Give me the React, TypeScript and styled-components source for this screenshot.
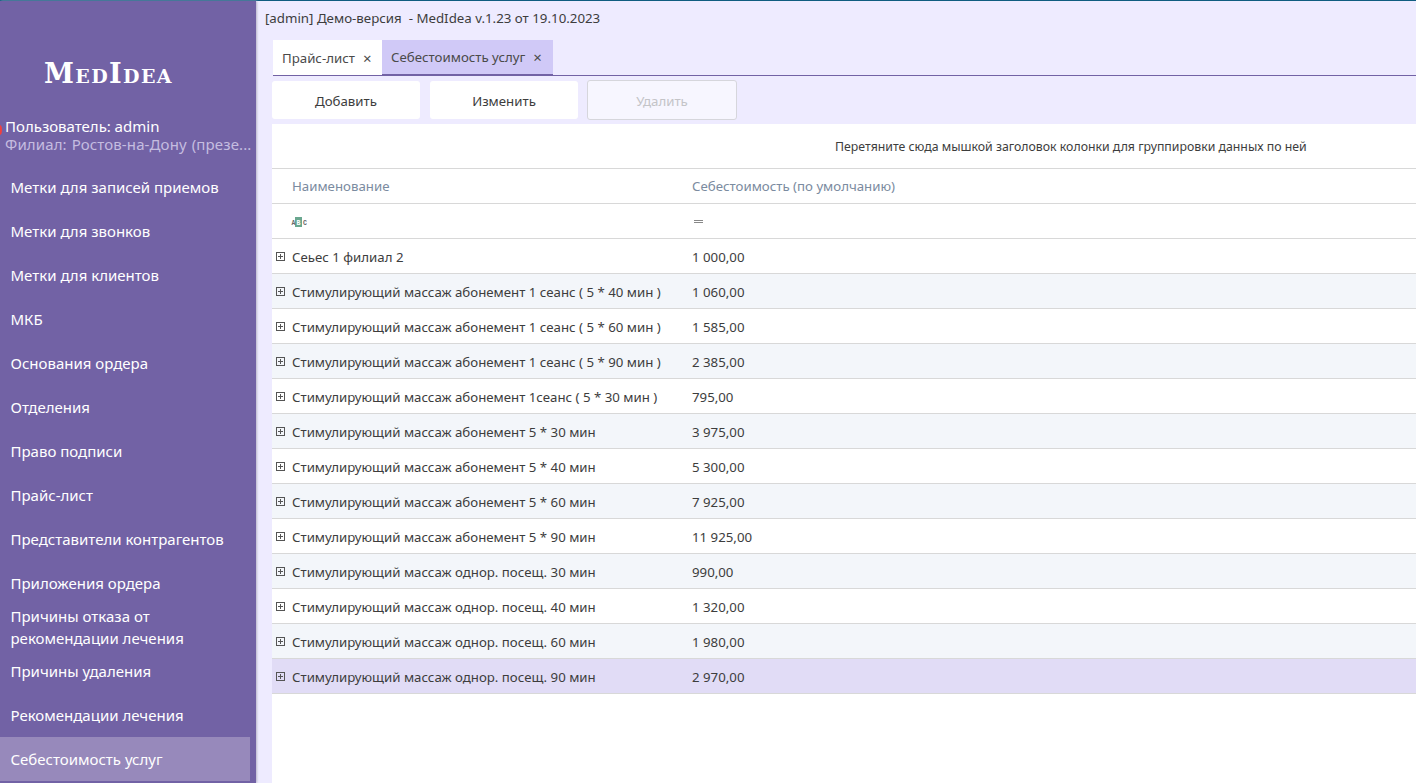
import React from "react";
import styled, { createGlobalStyle } from "styled-components";

const Global = createGlobalStyle`
  html, body { margin: 0; padding: 0; height: 100%; overflow: hidden; }
  body { font-family: "Noto Sans", "Open Sans", sans-serif; background: #eeebff; }
  #root { height: 100%; }
`;

const Page = styled.div`
  width: 1416px;
  height: 783px;
  display: flex;
  flex-direction: column;
  overflow: hidden;
  background: #eeebff;
`;
const TopLine = styled.div`
  height: 1px;
  flex: none;
  background: #0f5c80;
`;
const Body = styled.div`
  flex: 1;
  min-height: 0;
  display: flex;
`;
const Sidebar = styled.aside`
  width: 256px;
  flex: none;
  background: #7262a5;
  box-shadow: 1px 0 2px #b9b4c9;
  display: flex;
  flex-direction: column;
  overflow: hidden;
  color: #fff;
`;
const Logo = styled.div`
  height: 115px;
  flex: none;
  box-sizing: border-box;
  padding: 54px 0 0 44px;
  font-family: "DejaVu Serif", serif;
  font-weight: 700;
  font-size: 27px;
  line-height: 38px;
  letter-spacing: 1.4px;
  font-variant: small-caps;
  white-space: nowrap;
`;
const UserBlock = styled.div`
  position: relative;
  height: 49px;
  flex: none;
  box-sizing: border-box;
  padding: 1px 0 0 5px;
  font-size: 15px;
  line-height: 18px;
  white-space: pre;
`;
const Dot = styled.span`
  position: absolute;
  left: -3px;
  top: 9px;
  width: 5px;
  height: 10px;
  border-radius: 50%;
  background: #ef4040;
`;
const Branch = styled.div`
  color: #c5bde0;
  word-spacing: 1px;
  letter-spacing: 0.12px;
`;
const MenuItem = styled.div<{ $active?: boolean }>`
  height: 44px;
  width: 250px;
  flex: none;
  box-sizing: border-box;
  padding: 0 10px 0 10.5px;
  display: flex;
  align-items: center;
  font-size: 15px;
  line-height: 22px;
  background: ${(p) => (p.$active ? "#9789bb" : "transparent")};
`;
const Main = styled.main`
  flex: 1;
  min-width: 0;
  display: flex;
  flex-direction: column;
`;
const Title = styled.div`
  height: 39px;
  flex: none;
  box-sizing: border-box;
  padding: 8px 0 0 9px;
  font-size: 13.3px;
  line-height: 18px;
  color: #3d3d3d;
  white-space: pre;
`;
const TabBar = styled.div`
  height: 36px;
  flex: none;
  margin-left: 17px;
  display: flex;
  border-bottom: 1px solid #7262a5;
  box-sizing: border-box;
`;
const Tab = styled.div<{ $active?: boolean }>`
  height: ${(p) => (p.$active ? "36px" : "35px")};
  box-sizing: border-box;
  padding: 0 10.6px 0 9px;
  display: flex;
  align-items: center;
  gap: 8px;
  font-size: 13.25px;
  color: #4a4a4a;
  background: ${(p) => (p.$active ? "#d0c9f7" : "#fff")};
  border-bottom: ${(p) => (p.$active ? "2px solid #7262a5" : "none")};
  white-space: nowrap;
`;
const Close = styled.span`
  font-size: 15px;
`;
const Toolbar = styled.div`
  height: 38px;
  flex: none;
  margin: 5px 0 0 16px;
  display: flex;
  gap: 10px;
`;
const Btn = styled.button<{ $disabled?: boolean }>`
  height: ${(p) => (p.$disabled ? "40px" : "38px")};
  margin-top: ${(p) => (p.$disabled ? "-1px" : "0")};
  margin-left: ${(p) => (p.$disabled ? "-1px" : "0")};
  width: ${(p) => (p.$disabled ? "150px" : "148px")};
  box-sizing: border-box;
  border: ${(p) => (p.$disabled ? "1px solid #d6d6dc" : "none")};
  border-radius: 3px;
  background: ${(p) => (p.$disabled ? "#f7f6ff" : "#fff")};
  color: ${(p) => (p.$disabled ? "#c4c4c8" : "#3d3d3d")};
  font-family: inherit;
  font-size: 13.25px;
  padding: 1px 0 0;
`;
const Grid = styled.section`
  flex: 1;
  min-height: 0;
  margin: 5px 0 0 16px;
  background: #fff;
  display: flex;
  flex-direction: column;
`;
const GroupPanel = styled.div`
  height: 45px;
  flex: none;
  box-sizing: border-box;
  border-bottom: 1px solid #d8d8d8;
  padding-left: 563px;
  display: flex;
  align-items: center;
  font-size: 12.3px;
  color: #3d3d3d;
`;
const Row = styled.div<{ $bg?: string; $muted?: boolean }>`
  height: 35px;
  flex: none;
  box-sizing: border-box;
  display: grid;
  grid-template-columns: 20px 400px 1fr;
  align-items: center;
  border-bottom: 1px solid #d8d8d8;
  background: ${(p) => p.$bg ?? "#fff"};
  color: ${(p) => (p.$muted ? "#7b8ba0" : "#3d3d3d")};
  font-size: 13.25px;
  white-space: nowrap;
`;
const Expand = styled.svg`
  display: block;
  margin-left: 4px;
`;
const Cell = styled.div`
  padding-top: 1px;
`;
const HeadCell = styled.div`
  padding-bottom: 1px;
`;
const FilterGlyph = styled.svg`
  display: block;
  margin-left: -1px;
`;
const EqualsGlyph = styled.svg`
  display: block;
`;

const PlusBox = () => (
  <Expand width="9" height="9" viewBox="0 0 9 9" fill="none" stroke="#555" strokeWidth="1" shapeRendering="crispEdges">
    <rect x="0.5" y="0.5" width="8" height="8" />
    <path d="M2 4.5H7M4.5 2V7" />
  </Expand>
);
const AbcIcon = () => (
  <FilterGlyph width="16" height="10" viewBox="0 0 16 10">
    <rect x="4" y="0" width="7" height="10" fill="#6aa78f" />
    <text x="0.5" y="7.5" fontSize="6.5" fontWeight="700" fill="#666" fontFamily="Liberation Mono, monospace">A</text>
    <text x="5.5" y="7.5" fontSize="6.5" fontWeight="700" fill="#fff" fontFamily="Liberation Mono, monospace">B</text>
    <text x="12" y="7.5" fontSize="6.5" fontWeight="700" fill="#666" fontFamily="Liberation Mono, monospace">C</text>
  </FilterGlyph>
);
const EqualsIcon = () => (
  <EqualsGlyph width="11" height="3" viewBox="0 0 11 3" shapeRendering="crispEdges">
    <path d="M2 .5H11M2 2.5H11" stroke="#888" strokeWidth="1" />
  </EqualsGlyph>
);

const menu = [
  "Метки для записей приемов",
  "Метки для звонков",
  "Метки для клиентов",
  "МКБ",
  "Основания ордера",
  "Отделения",
  "Право подписи",
  "Прайс-лист",
  "Представители контрагентов",
  "Приложения ордера",
  "Причины отказа от рекомендации лечения",
  "Причины удаления",
  "Рекомендации лечения",
];
const rows: [string, string][] = [
  ["Сеьес 1 филиал 2", "1 000,00"],
  ["Стимулирующий массаж абонемент 1 сеанс ( 5 * 40 мин )", "1 060,00"],
  ["Стимулирующий массаж абонемент 1 сеанс ( 5 * 60 мин )", "1 585,00"],
  ["Стимулирующий массаж абонемент 1 сеанс ( 5 * 90 мин )", "2 385,00"],
  ["Стимулирующий массаж абонемент 1сеанс ( 5 * 30 мин )", "795,00"],
  ["Стимулирующий массаж абонемент 5 * 30 мин", "3 975,00"],
  ["Стимулирующий массаж абонемент 5 * 40 мин", "5 300,00"],
  ["Стимулирующий массаж абонемент 5 * 60 мин", "7 925,00"],
  ["Стимулирующий массаж абонемент 5 * 90 мин", "11 925,00"],
  ["Стимулирующий массаж однор. посещ. 30 мин", "990,00"],
  ["Стимулирующий массаж однор. посещ. 40 мин", "1 320,00"],
  ["Стимулирующий массаж однор. посещ. 60 мин", "1 980,00"],
  ["Стимулирующий массаж однор. посещ. 90 мин", "2 970,00"],
];

export default function App() {
  return (
    <Page>
      <Global />
      <TopLine />
      <Body>
        <Sidebar>
          <Logo>MedIdea</Logo>
          <UserBlock>
            <Dot />
            <div>Пользователь: admin</div>
            <Branch>{"Филиал: Ростов-на-Дону (презе..."}</Branch>
          </UserBlock>
          {menu.map((m) => (
            <MenuItem key={m}>{m}</MenuItem>
          ))}
          <MenuItem $active>Себестоимость услуг</MenuItem>
        </Sidebar>
        <Main>
          <Title>{"[admin] Демо-версия  - MedIdea v.1.23 от 19.10.2023"}</Title>
          <TabBar>
            <Tab>Прайс-лист <Close>×</Close></Tab>
            <Tab $active>Себестоимость услуг <Close>×</Close></Tab>
          </TabBar>
          <Toolbar>
            <Btn>Добавить</Btn>
            <Btn>Изменить</Btn>
            <Btn $disabled disabled>Удалить</Btn>
          </Toolbar>
          <Grid>
            <GroupPanel>Перетяните сюда мышкой заголовок колонки для группировки данных по ней</GroupPanel>
            <Row $muted>
              <span />
              <HeadCell>Наименование</HeadCell>
              <HeadCell>Себестоимость (по умолчанию)</HeadCell>
            </Row>
            <Row>
              <span />
              <Cell><AbcIcon /></Cell>
              <Cell><EqualsIcon /></Cell>
            </Row>
            {rows.map(([name, cost], i) => (
              <Row key={name} $bg={i === 12 ? "#e1dcf6" : i % 2 === 1 ? "#f3f6fa" : "#fff"}>
                <PlusBox />
                <Cell>{name}</Cell>
                <Cell>{cost}</Cell>
              </Row>
            ))}
          </Grid>
        </Main>
      </Body>
    </Page>
  );
}
